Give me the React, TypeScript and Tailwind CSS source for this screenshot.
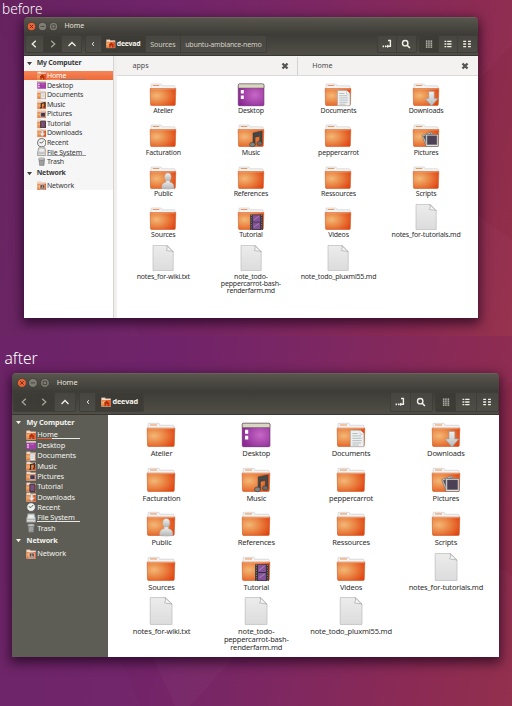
import type { ReactNode } from "react";
import { clsx } from "clsx";

type Kind = "folder" | "desktop" | "documents" | "downloads" | "music" | "pictures" | "public" | "video" | "file";
type Place = "home" | "desktop" | "documents" | "music" | "pictures" | "tutorial" | "downloads" | "recent" | "disk" | "trash" | "network";

function Defs() {
  return (
    <svg className="absolute h-0 w-0" aria-hidden="true">
      <defs>
        <radialGradient id="orange" cx="0.25" cy="0.42" r="0.82">
          <stop offset="0" stopColor="#f3b877" />
          <stop offset="0.5" stopColor="#ea8241" />
          <stop offset="1" stopColor="#e04614" />
        </radialGradient>
        <radialGradient id="violet" cx="0.65" cy="0.5" r="0.7">
          <stop offset="0" stopColor="#c768c6" />
          <stop offset="1" stopColor="#8a2793" />
        </radialGradient>
        <linearGradient id="paper" x1="0" y1="0" x2="0" y2="1">
          <stop offset="0" stopColor="#ececec" />
          <stop offset="1" stopColor="#dcdcdc" />
        </linearGradient>
        <linearGradient id="steel" x1="0" y1="0" x2="0" y2="1">
          <stop offset="0" stopColor="#f2f2f2" />
          <stop offset="1" stopColor="#b4b6b6" />
        </linearGradient>
      </defs>
    </svg>
  );
}

function Emblem({ kind }: { kind: Kind }) {
  switch (kind) {
    case "documents":
      return (
        <g>
          <path d="M12.5 10.5h9.2l3.3 3.3v12H12.5z" fill="#eef0f0" stroke="#a6aaaa" strokeWidth=".6" />
          <path d="M21.5 10.5v3.5H25" fill="#fff" stroke="#a6aaaa" strokeWidth=".5" />
          <path d="M14.3 13.5h5M14.3 15.7h8M14.3 17.9h8.6M14.3 20.1h8.6M14.3 22.3h8M14.3 24.2h6" stroke="#b0b5b5" strokeWidth=".8" />
        </g>
      );
    case "downloads":
      return <path d="M15.8 11.5h5.4v7h3.6L18.5 26l-6.3-7.5h3.6z" fill="url(#steel)" stroke="#9b9d9d" strokeWidth=".6" />;
    case "music":
      return (
        <g fill="#454744" stroke="#333532" strokeWidth=".5">
          <path d="M15 12l9-1.8v12.2h-2.2v-7.2l-4.7 1v7.8H15z" />
          <ellipse cx="14.4" cy="23.6" rx="2.8" ry="2.2" fill="#7f827e" />
          <ellipse cx="21.6" cy="22.3" rx="2.6" ry="2.1" fill="#696c68" />
        </g>
      );
    case "pictures":
      return (
        <g stroke="#555" strokeWidth=".5">
          <path d="M9 14.5l9.5-3.5 3 9-8.8 4z" fill="#ddd" />
          <path d="M10.4 15.3l7.6-2.8 2 7-6.5 2.4z" fill="#514f5c" />
          <path d="M12.8 13.5h12.4v12H12.8z" fill="#e7e7e7" />
          <path d="M14.2 14.8h9.6v8.8h-9.6z" fill="#4b4056" />
        </g>
      );
    case "public":
      return (
        <g fill="url(#steel)" stroke="#bcbcbc" strokeWidth=".5">
          <path d="M12 25.6c-.4-4.2 1-5.7 4-6.3v-2h3.8v2c3 .6 4.4 2.2 4 6.3-3 .7-8.8.7-11.8 0z" />
          <ellipse cx="17.9" cy="13.8" rx="3.2" ry="3.9" />
        </g>
      );
    case "video":
      return (
        <g>
          <path d="M12.2 10.5h12.6v15.4H12.2z" fill="#343238" />
          <path d="M14.8 11.2h7.4v6.5h-7.4zM14.8 18.5h7.4v6.8h-7.4z" fill="#85529a" />
          <path d="M16 16l5-4M16 23l5-3.5" stroke="#a97bb8" strokeWidth="1" />
          <path d="M13.4 11v15M23.6 11v15" stroke="#999" strokeWidth=".8" strokeDasharray="1 1.3" />
        </g>
      );
    default:
      return null;
  }
}

function FileIcon({ kind, big }: { kind: Kind; big: boolean }) {
  return (
    <svg viewBox="0 0 26 26" className={clsx("shrink-0 overflow-visible", big ? "h-[28px] w-[28px]" : "h-[26px] w-[26px]")}>
      {kind === "file" ? (
        <g stroke="#bdbdbd" strokeWidth=".7">
          <path d="M3 .5h14.4l5.8 6v19H3z" fill="url(#paper)" />
          <path d="M16.7.5c.8 1.8.6 3.2-.4 4.9 1.9.9 5 .2 6.9 1.4z" fill="#f5f5f5" stroke="#a9a9a9" />
        </g>
      ) : kind === "desktop" ? (
        <g>
          <rect x=".3" y="4" width="25.6" height="21.7" rx="1" fill="url(#violet)" stroke="#6a2770" strokeWidth=".7" />
          <path d="M.3 5q0-1 1-1h23.6q1 0 1 1v3H.3z" fill="#d9d7c4" stroke="#65624f" strokeWidth=".5" />
          <path d="M2.8 10h3v3.6h-3zM2.8 15.5h3v3.6h-3z" fill="#fff" />
        </g>
      ) : (
        <g>
          <path d="M1 10V4.8Q1 4 1.8 4h8.8q.8 0 1 .8l.3 1h12.2q1 0 1 1V11H1z" fill="#f3f3f3" stroke="#c9c9c9" strokeWidth=".6" />
          <path d="M2.8 5.5h6.5" stroke="#ef955f" strokeWidth="1" />
          <path d="M.2 8.5h25.6l-.5 16q0 1-1 1H1.5q-1 0-1-1z" fill="url(#orange)" stroke="#cf5a25" strokeWidth=".6" />
          <path d="M.6 9h24.7" stroke="#f5b487" strokeWidth=".6" />
          <Emblem kind={kind} />
        </g>
      )}
    </svg>
  );
}

function PlaceIcon({ place, big }: { place: Place; big?: boolean }) {
  let art: ReactNode;
  if (place === "recent")
    art = (
      <g>
        <circle cx="5" cy="5" r="4.3" fill="#f2f2f0" stroke="#555" strokeWidth=".9" />
        <path d="M7.2 2.8L5 5.3 2.7 4.6" stroke="#444" strokeWidth=".8" fill="none" />
      </g>
    );
  else if (place === "disk")
    art = (
      <g>
        <path d="M1.8.8h6.4L9.5 6v3H.5V6z" fill="#d6d8d6" stroke="#888b88" strokeWidth=".7" />
        <path d="M1 6.3h8" stroke="#999" strokeWidth=".6" />
        <ellipse cx="5" cy="3.4" rx="2.6" ry="1.5" fill="#eee" />
      </g>
    );
  else if (place === "trash")
    art = (
      <g>
        <path d="M2 2h6l-.6 7H2.7z" fill="#8f918f" stroke="#777a77" strokeWidth=".5" />
        <ellipse cx="5" cy="2" rx="3.4" ry="1.1" fill="#d0d2d0" stroke="#777" strokeWidth=".5" />
        <path d="M4 4v4M6 4v4" stroke="#c1c3c1" strokeWidth=".6" />
      </g>
    );
  else if (place === "desktop")
    art = (
      <g>
        <path d="M.3 1h9.4v8.2H.3z" fill="#a43da8" />
        <path d="M.3 1h9.4v1.7H.3z" fill="#ccd3a7" />
        <path d="M1.3 4h1.3v1.3H1.3zM1.3 6.3h1.3v1.3H1.3zM4.3 4.2h3.5" fill="#fff" stroke="#e5aee2" strokeWidth=".4" />
      </g>
    );
  else
    art = (
      <g>
        <path d="M.5.8h3.6l.5.8h5v7.7H.5z" fill="#f4ddcc" stroke="#d6b39b" strokeWidth=".4" />
        <path d="M.4 3h9.2v6.2H.4z" fill="url(#orange)" />
        {place === "home" && <path d="M2.5 6.2l3-2.7 3 2.7h-.8v2.7H6.3V7.2H4.8v1.7H3.4V6.2z" fill="#b42d10" />}
        {place === "documents" && <path d="M4 2.6h4.8v6.6H4zM5 4h2.8M5 5.6h2.8M5 7.2h2.8" fill="#f1f3f3" stroke="#a4abab" strokeWidth=".5" />}
        {place === "music" && <path d="M4.5 8.4V3.6l3.8-1v4.6M3.3 8.3h1.5M6.8 7.5h1.5" stroke="#333" strokeWidth="1.3" fill="none" />}
        {place === "pictures" && <path d="M3.8 3.7h5.1v4.7H3.8z" fill="#453650" stroke="#e2e2e2" strokeWidth=".6" />}
        {place === "tutorial" && <path d="M3.8 2.3h5v7h-5z" fill="#76507f" stroke="#333" strokeWidth=".9" />}
        {place === "downloads" && <path d="M4.5 2.5h2.2v3H8.6l-3 3.7-3-3.7h1.9z" fill="#e8e8e8" stroke="#999" strokeWidth=".4" />}
        {place === "network" && <path d="M3.2 4h5v4.6h-5zM5.7 4.8v2M4.3 7.3h3" fill="#5a4441" stroke="#eee" strokeWidth=".6" />}
      </g>
    );
  return (
    <svg viewBox="0 0 10 10" className={clsx("shrink-0", big ? "h-[10.2px] w-[10.2px]" : "h-[9.5px] w-[9.5px]")}>
      {art}
    </svg>
  );
}

function Glyph({ name, dim }: { name: "back" | "forward" | "up" | "small" | "path" | "search" | "grid" | "list" | "compact"; dim?: boolean }) {
  const color = dim ? "#a3a198" : "#f0eee7";
  const shapes = {
    back: <path d="M7.8 2.8L4.3 6l3.5 3.2" />,
    forward: <path d="M4.2 2.8L7.7 6 4.2 9.2" />,
    up: <path d="M2.5 7.9L6 4.5l3.5 3.4" />,
    small: <path d="M7 4.2L5.1 6 7 7.8" strokeWidth="1" />,
    path: (
      <g>
        <path d="M7 2.5h2.4v5.8H5.8" />
        <path d="M7.2 6.4v3.8L5 8.3z" fill={color} stroke="none" />
        <path d="M1.6 8.3h1.5M4 8.3h1" strokeWidth="1.7" />
      </g>
    ),
    search: (
      <g>
        <circle cx="5.2" cy="5.2" r="2.7" />
        <path d="M7.2 7.2l2.7 2.8" strokeWidth="1.6" />
      </g>
    ),
    grid: <path d="M2.9 3.1h6.3M2.9 5.1h6.3M2.9 7.1h6.3M2.9 9.1h6.3" strokeDasharray="1.2 .5" strokeWidth="1" />,
    list: (
      <g>
        <path d="M2.5 3.4h1.8M2.5 6h1.8M2.5 8.6h1.8" />
        <path d="M5.2 3.4h4.3M5.2 6h4.3M5.2 8.6h4.3" />
      </g>
    ),
    compact: <path d="M2.2 3.4h2.9M7 3.4h2.9M2.2 6h2.9M7 6h2.9M2.2 8.6h2.9M7 8.6h2.9" />,
  };
  return (
    <svg viewBox="0 0 12 12" fill="none" stroke={color} strokeWidth="1.4" className="h-[12px] w-[12px] shrink-0">
      {shapes[name]}
    </svg>
  );
}

function Cell({ width, pressed, children }: { width: string; pressed?: boolean; children: ReactNode }) {
  return (
    <div
      className={clsx(
        "flex h-full shrink-0 items-center justify-center border-r border-[#403e38] last:border-r-0",
        width,
        pressed && "bg-[#393832]/80",
      )}
    >
      {children}
    </div>
  );
}

function Group({ children }: { children: ReactNode }) {
  return <div className="flex h-full shrink-0 overflow-hidden rounded-[2px] border border-[#403e38] bg-[#504e47]/50">{children}</div>;
}

function TitleBar({ big }: { big: boolean }) {
  const dot = big ? "h-[9.8px] w-[9.8px]" : "h-[9px] w-[9px]";
  const glyphs = ["M3.2 3.2l3.6 3.6M6.8 3.2L3.2 6.8", "M2.8 5h4.4", "M3.2 3.2h3.6v3.6H3.2z"];
  return (
    <div
      className={clsx(
        "flex items-center border-t border-[#65635a] bg-linear-to-b from-[#57554c] to-[#3e3d38]",
        big ? "h-[18px] pl-[4.6px]" : "h-[17px] pt-[0.6px] pl-[3.8px]",
      )}
    >
      <div className={clsx("flex", big ? "gap-[1.9px]" : "gap-[1.8px]")}>
        {glyphs.map((d, i) => (
          <svg key={d} viewBox="0 0 10 10" className={dot}>
            <circle cx="5" cy="5" r="4.5" fill={i === 0 ? "#ec6536" : "#7f7d75"} stroke="#34322d" strokeWidth=".6" />
            <path d={d} fill="none" stroke={i === 0 ? "#6b2a14" : "#46443e"} strokeWidth="1" />
          </svg>
        ))}
      </div>
      <span className={clsx("text-[#e6e3da]", big ? "ml-[7px] text-[7.4px] tracking-[-0.08px]" : "ml-[6.6px] text-[7px] tracking-[-0.08px]")}>Home</span>
    </div>
  );
}

function ToolBar({ big }: { big: boolean }) {
  const w = big ? "w-[20.3px]" : "w-[18.4px]";
  const wide = big ? "w-[20.6px]" : "w-[19px]";
  return (
    <div
      className={clsx(
        "flex items-start justify-between border-b border-[#383731] bg-linear-to-b from-[#3d3c36] to-[#504e47]",
        big ? "h-[24px] pt-[1px] pb-[2.5px] pl-[1.2px]" : "h-[22px] pt-[1px] pb-[2px] pl-[1.2px]",
      )}
    >
      <div className={clsx("flex h-full", big ? "gap-[3px]" : "gap-[3px]")}>
        <Group>
          <Cell width={w} pressed={big}><Glyph name="back" dim={big} /></Cell>
          <Cell width={w} pressed><Glyph name="forward" dim /></Cell>
          <Cell width={w}><Glyph name="up" /></Cell>
        </Group>
        <Group>
          <Cell width="w-[16px]"><Glyph name="small" /></Cell>
          <Cell width={big ? "w-[47px]" : "w-[44px]"} pressed>
            <PlaceIcon place="home" big={big} />
            <span className={clsx("ml-[1px] font-bold text-[#f4f2ec]", big ? "text-[7.3px] tracking-[-0.15px]" : "text-[6.9px] tracking-[-0.2px]")}>deevad</span>
          </Cell>
          {!big && <Cell width="w-[35px]"><span className="text-[7.1px] tracking-[-0.15px] text-[#d2cfc5]">Sources</span></Cell>}
          {!big && <Cell width="w-[85px]"><span className="text-[7.1px] tracking-[-0.23px] text-[#d2cfc5]">ubuntu-ambiance-nemo</span></Cell>}
        </Group>
      </div>
      <div className={clsx("flex h-full", big ? "gap-[2px]" : "gap-[2px]")}>
        <Group>
          <Cell width={wide}><Glyph name="path" /></Cell>
          <Cell width={wide}><Glyph name="search" /></Cell>
        </Group>
        <Group>
          <Cell width={wide} pressed><Glyph name="grid" /></Cell>
          <Cell width={wide}><Glyph name="list" /></Cell>
          <Cell width={wide}><Glyph name="compact" /></Cell>
        </Group>
      </div>
    </div>
  );
}

const places: [Place, string][] = [
  ["home", "Home"],
  ["desktop", "Desktop"],
  ["documents", "Documents"],
  ["music", "Music"],
  ["pictures", "Pictures"],
  ["tutorial", "Tutorial"],
  ["downloads", "Downloads"],
  ["recent", "Recent"],
  ["disk", "File System"],
  ["trash", "Trash"],
];

function Heading({ big, children }: { big: boolean; children: ReactNode }) {
  return (
    <div className={clsx("flex items-center font-bold", big ? "h-[15px] pl-[4px] text-[7.3px] tracking-[-0.15px]" : "h-[14.5px] pl-[3px] text-[6.9px] tracking-[-0.18px]")}>
      <svg viewBox="0 0 5 5" className="h-[5px] w-[5px]" fill="currentColor"><path d="M0 1h5L2.5 4.2z" /></svg>
      <span className={big ? "ml-[5.6px]" : "ml-[5.2px]"}>{children}</span>
    </div>
  );
}

function PlaceRow({ place, label, big }: { place: Place; label: string; big: boolean }) {
  const active = place === "home" && !big;
  const usage = place === "home" || place === "disk";
  return (
    <div
      className={clsx(
        "flex items-center",
        big ? "h-[10.35px] pl-[14.2px] text-[7.4px] tracking-[-0.12px]" : "h-[9.56px] pl-[13.1px] text-[7px] tracking-[-0.15px]",
        active && "bg-linear-to-b from-[#f58458] to-[#ee6a37] text-white",
      )}
    >
      <PlaceIcon place={place} big={big} />
      <div className={clsx("relative ml-[0.8px] leading-none", usage && (big ? "w-[43px]" : "w-[39px]"))}>
        {label}
        {usage && (
          <div className={clsx("absolute -bottom-[0.6px] left-0 flex h-px w-full", big ? "bg-[#e8e8e4]" : active ? "bg-[#9a7b72]" : "bg-[#999]")}>
            {place === "home" && <div className={clsx("h-full w-1/3", big ? "bg-[#ee5d2b]" : "bg-[#f58458]")} />}
          </div>
        )}
      </div>
    </div>
  );
}

function Sidebar({ big }: { big: boolean }) {
  return (
    <div className={clsx("shrink-0", big ? "w-[95.5px] bg-[#5d5d56] text-[#f2f1ec]" : "w-[90px] border-r border-[#d4d4d4] bg-white text-[#3a3a3a]")}>
      <div className={clsx(!big && "h-[134px] bg-[#f6f6f6] pt-[0.4px]")}>
        <Heading big={big}>My Computer</Heading>
        {places.map(([place, label]) => <PlaceRow key={place} place={place} label={label} big={big} />)}
        <Heading big={big}>Network</Heading>
        <PlaceRow place="network" label="Network" big={big} />
      </div>
    </div>
  );
}

const files: [Kind, string[]][] = [
  ["folder", ["Atelier"]],
  ["desktop", ["Desktop"]],
  ["documents", ["Documents"]],
  ["downloads", ["Downloads"]],
  ["folder", ["Facturation"]],
  ["music", ["Music"]],
  ["folder", ["peppercarrot"]],
  ["pictures", ["Pictures"]],
  ["public", ["Public"]],
  ["folder", ["References"]],
  ["folder", ["Ressources"]],
  ["folder", ["Scripts"]],
  ["folder", ["Sources"]],
  ["video", ["Tutorial"]],
  ["folder", ["Videos"]],
  ["file", ["notes_for-tutorials.md"]],
  ["file", ["notes_for-wiki.txt"]],
  ["file", ["note_todo-", "peppercarrot-bash-", "renderfarm.md"]],
  ["file", ["note_todo_pluxml55.md"]],
];

function FileGrid({ big }: { big: boolean }) {
  return (
    <div className={clsx("grid", big ? "ml-[6.6px] grid-cols-[repeat(4,94.8px)] auto-rows-[44.6px] pt-[4px]" : "ml-[3px] grid-cols-[repeat(4,87.6px)] auto-rows-[41.3px] pt-[4.5px]")}>
      {files.map(([kind, lines]) => (
        <div key={lines[0]} className="flex flex-col items-center">
          <FileIcon kind={kind} big={big} />
          <div
            className={clsx(
              "flex flex-col items-center whitespace-nowrap text-[#2e2e2e]",
              big ? "mt-[2px] text-[7.5px] leading-[8px] tracking-[-0.19px]" : "mt-[1.4px] text-[7px] leading-[7.4px] tracking-[-0.2px]",
            )}
          >
            {lines.map((line) => <span key={line}>{line}</span>)}
          </div>
        </div>
      ))}
    </div>
  );
}

function CloseMark() {
  return (
    <svg viewBox="0 0 8 8" className="h-[8px] w-[8px]"><path d="M1.5 1.5l5 5M6.5 1.5l-5 5" stroke="#555" strokeWidth="2.3" /></svg>
  );
}

function Tabs() {
  return (
    <div className="flex h-[19.5px] border-b border-[#dadada] bg-[#f3f2f1] pt-px text-[7.1px] text-[#4b4b4b]">
      <div className="flex w-[181px] items-center justify-between border-r border-[#d2d2d2] pr-[8px] pl-[16px]"><span>apps</span><CloseMark /></div>
      <div className="flex flex-1 items-center justify-between pr-[8.5px] pl-[14.8px]"><span>Home</span><CloseMark /></div>
    </div>
  );
}

function FileWindow({ big }: { big: boolean }) {
  return (
    <div
      className={clsx(
        "relative flex flex-col overflow-hidden rounded-t-[4px] shadow-[0_4px_12px_2px_rgba(20,0,20,0.65)]",
        big ? "ml-[12px] h-[284px] w-[486.5px]" : "ml-[23.5px] h-[301px] w-[454px]",
      )}
    >
      <TitleBar big={big} />
      <ToolBar big={big} />
      <div className="flex min-h-0 flex-1 bg-white">
        <Sidebar big={big} />
        <div className={clsx("flex-1", !big && "border-l-[3px] border-[#f0efee]")}>
          {!big && <Tabs />}
          <FileGrid big={big} />
        </div>
      </div>
    </div>
  );
}

function Wallpaper({ height, facet }: { height: number; facet?: boolean }) {
  return (
    <svg viewBox={"0 0 512 " + height} className="absolute inset-0 h-full w-full" preserveAspectRatio="none">
      <path d={`M0 30L140 ${height}H0z`} fill="#fff" opacity=".012" />
      {facet && <path d={`M150 ${height - 55}L175 ${height}H190L240 ${height - 55}z`} fill="#fff" opacity=".025" />}
      <path d="M512 45L455 105V200L512 240z" fill="#500" opacity=".06" />
    </svg>
  );
}

export default function App() {
  return (
    <main className="h-[706px] w-[512px] overflow-hidden font-['Noto_Sans','Open_Sans',sans-serif] text-white">
      <Defs />
      <section className="relative h-[336px] bg-[linear-gradient(100deg,#66225f_0%,#70246a_30%,#7c2763_55%,#8b2a54_82%,#97334e_100%)]">
        <Wallpaper height={336} />
        <h1 className="relative h-[17px] pl-[2px] text-[13.6px] leading-[17px] font-light">before</h1>
        <FileWindow big={false} />
      </section>
      <section className="relative h-[370px] bg-[linear-gradient(100deg,#6c2367_0%,#70236a_30%,#7c2763_55%,#8b2a54_82%,#93304e_100%)]">
        <Wallpaper height={370} facet />
        <h1 className="relative h-[37px] pt-[14px] pl-[4.5px] text-[15.6px] leading-[17px] font-light">after</h1>
        <FileWindow big />
      </section>
    </main>
  );
}
